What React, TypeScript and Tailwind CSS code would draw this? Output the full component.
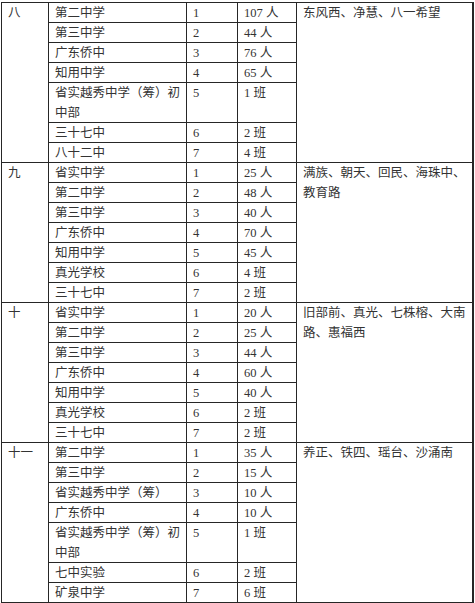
import React from "react";

type Row = { name: React.ReactNode; rank: string; count: string; tall?: boolean };
type Group = { id: string; area: React.ReactNode; rows: Row[] };

const longName = (
  <>
    省实越秀中学（筹）初
    <br />
    中部
  </>
);

const groups: Group[] = [
  {
    id: "八",
    area: <>东风西、净慧、八一希望</>,
    rows: [
      { name: "第二中学", rank: "1", count: "107 人" },
      { name: "第三中学", rank: "2", count: "44 人" },
      { name: "广东侨中", rank: "3", count: "76 人" },
      { name: "知用中学", rank: "4", count: "65 人" },
      { name: longName, rank: "5", count: "1 班", tall: true },
      { name: "三十七中", rank: "6", count: "2 班" },
      { name: "八十二中", rank: "7", count: "4 班" },
    ],
  },
  {
    id: "九",
    area: (
      <>
        满族、朝天、回民、海珠中、
        <br />
        教育路
      </>
    ),
    rows: [
      { name: "省实中学", rank: "1", count: "25 人" },
      { name: "第二中学", rank: "2", count: "48 人" },
      { name: "第三中学", rank: "3", count: "40 人" },
      { name: "广东侨中", rank: "4", count: "70 人" },
      { name: "知用中学", rank: "5", count: "45 人" },
      { name: "真光学校", rank: "6", count: "4 班" },
      { name: "三十七中", rank: "7", count: "2 班" },
    ],
  },
  {
    id: "十",
    area: (
      <>
        旧部前、真光、七株榕、大南
        <br />
        路、惠福西
      </>
    ),
    rows: [
      { name: "省实中学", rank: "1", count: "20 人" },
      { name: "第二中学", rank: "2", count: "25 人" },
      { name: "第三中学", rank: "3", count: "44 人" },
      { name: "广东侨中", rank: "4", count: "60 人" },
      { name: "知用中学", rank: "5", count: "40 人" },
      { name: "真光学校", rank: "6", count: "2 班" },
      { name: "三十七中", rank: "7", count: "2 班" },
    ],
  },
  {
    id: "十一",
    area: <>养正、铁四、瑶台、沙涌南</>,
    rows: [
      { name: "第二中学", rank: "1", count: "35 人" },
      { name: "第三中学", rank: "2", count: "15 人" },
      { name: "省实越秀中学（筹）", rank: "3", count: "10 人" },
      { name: "广东侨中", rank: "4", count: "10 人" },
      { name: longName, rank: "5", count: "1 班", tall: true },
      { name: "七中实验", rank: "6", count: "2 班" },
      { name: "矿泉中学", rank: "7", count: "6 班" },
    ],
  },
];

const cell =
  "border border-[#262626] p-0 pl-[6px] align-top whitespace-nowrap overflow-hidden";

function Box({ tall, children }: { tall?: boolean; children: React.ReactNode }) {
  return (
    <div className={(tall ? "h-[39px]" : "h-[19px]") + " pt-px leading-[19.5px] overflow-visible"}>
      {children}
    </div>
  );
}

export default function App() {
  return (
    <div
      className="w-[475px] h-[603px] bg-white overflow-hidden pt-[2px] pl-px text-[#333333] text-[12.5px]"
      style={{ fontFamily: '"Liberation Serif", "Noto Sans CJK SC", serif' }}
    >
      <table className="table-fixed border-collapse w-[471px]">
        <colgroup>
          <col className="w-[47px]" />
          <col className="w-[138px]" />
          <col className="w-[51px]" />
          <col className="w-[59px]" />
          <col className="w-[176px]" />
        </colgroup>
        <tbody>
          {groups.map((g) =>
            g.rows.map((r, i) => (
              <tr key={g.id + i}>
                {i === 0 && (
                  <td rowSpan={g.rows.length} className={cell}>
                    <div className="pt-px leading-[19.5px]">{g.id}</div>
                  </td>
                )}
                <td className={cell}>
                  <Box tall={r.tall}>{r.name}</Box>
                </td>
                <td className={cell}>
                  <Box tall={r.tall}>{r.rank}</Box>
                </td>
                <td className={cell}>
                  <Box tall={r.tall}>{r.count}</Box>
                </td>
                {i === 0 && (
                  <td rowSpan={g.rows.length} className={cell + " border-r-2"}>
                    <div className="pt-px leading-[19.5px]">{g.area}</div>
                  </td>
                )}
              </tr>
            ))
          )}
        </tbody>
      </table>
    </div>
  );
}
